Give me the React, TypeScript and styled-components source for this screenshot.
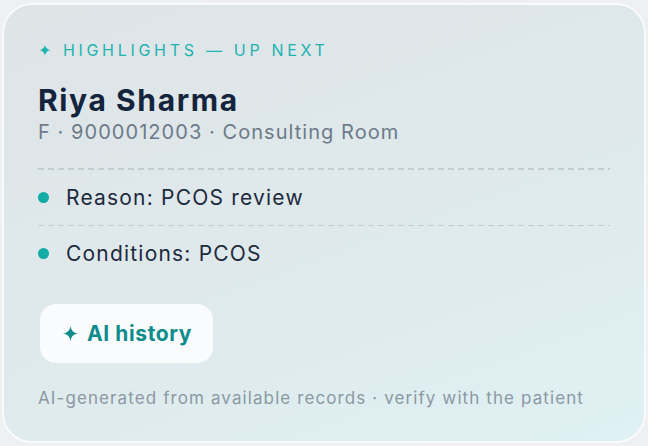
import styled, { createGlobalStyle } from "styled-components";

const GlobalStyle = createGlobalStyle`
  html, body {
    margin: 0;
    padding: 0;
    background: #eef0f2;
  }
  body {
    font-family: "Inter", "Liberation Sans", sans-serif;
  }
`;

const Page = styled.div`
  width: 648px;
  height: 446px;
  padding: 3px 2px 3px 2px;
  box-sizing: border-box;
`;

const Card = styled.div`
  height: 100%;
  box-sizing: border-box;
  border: 2px solid #f8fafb;
  border-radius: 30px;
  background: linear-gradient(160deg, #dfe4e7 0%, #dfe9eb 50%, #dff1f4 100%);
  padding: 34px 34px 0 34px;
  display: flex;
  flex-direction: column;
`;

const Eyebrow = styled.div`
  font-size: 16px;
  font-weight: 400;
  letter-spacing: 3.7px;
  color: #1db3b0;
  text-transform: uppercase;
  line-height: 22px;
`;

const Name = styled.div`
  margin-top: 21px;
  font-size: 30px;
  font-weight: 700;
  color: #14243d;
  letter-spacing: 1.6px;
  line-height: 36px;
`;

const Meta = styled.div`
  font-size: 20px;
  color: #6d7a8a;
  letter-spacing: 1.05px;
  line-height: 28px;
`;

const Divider = styled.div`
  height: 1.5px;
  background-image: repeating-linear-gradient(
    90deg,
    #c4cdd4 0,
    #c4cdd4 6px,
    transparent 6px,
    transparent 10px
  );
`;

const List = styled.div`
  margin-top: 22px;
  display: flex;
  flex-direction: column;
`;

const Row = styled.div`
  display: flex;
  align-items: center;
  gap: 17px;
  height: 55px;
  font-size: 21px;
  color: #1d2a3e;
  letter-spacing: 1.2px;
`;

const Dot = styled.span`
  width: 11px;
  height: 11px;
  border-radius: 50%;
  background: #14aaa6;
  flex-shrink: 0;
`;

const HistoryButton = styled.button`
  align-self: flex-start;
  margin-top: 23px;
  margin-left: 2px;
  height: 59px;
  padding: 0 21px 0 22px;
  border: none;
  border-radius: 16px;
  background: rgba(255, 255, 255, 0.82);
  display: flex;
  align-items: center;
  gap: 8px;
  font-family: inherit;
  font-size: 21px;
  font-weight: 700;
  letter-spacing: 0.6px;
  color: #0e8b8b;
  cursor: pointer;
`;

const Footnote = styled.div`
  margin-top: 25px;
  font-size: 17px;
  color: #8b98a3;
  letter-spacing: 1.1px;
`;

const Sparkle = ({ size }: { size: number }) => (
  <svg width={size} height={size} viewBox="0 0 24 24" fill="currentColor">
    <path d="M12 1 C13 8 16 11 23 12 C16 13 13 16 12 23 C11 16 8 13 1 12 C8 11 11 8 12 1 Z" />
  </svg>
);

const App: React.FC = () => {
  return (
    <>
      <GlobalStyle />
      <Page>
        <Card>
          <Eyebrow>✦ Highlights — Up next</Eyebrow>
          <Name>Riya Sharma</Name>
          <Meta>F · 9000012003 · Consulting Room</Meta>
          <List>
            <Divider />
            <Row>
              <Dot />
              Reason: PCOS review
            </Row>
            <Divider />
            <Row>
              <Dot />
              Conditions: PCOS
            </Row>
          </List>
          <HistoryButton>
            <Sparkle size={17} />
            AI history
          </HistoryButton>
          <Footnote>AI-generated from available records · verify with the patient</Footnote>
        </Card>
      </Page>
    </>
  );
};

export default App;
